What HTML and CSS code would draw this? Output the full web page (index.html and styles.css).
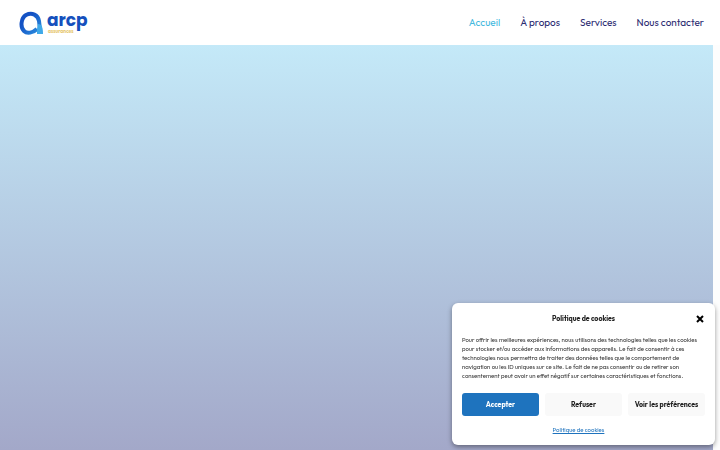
FILE: index.html
```html
<!DOCTYPE html>
<html lang="fr">
<head>
    <meta charset="UTF-8">
    <meta name="viewport" content="width=device-width, initial-scale=1.0">
    <title>ARCP Assurances</title>
    <link rel="stylesheet" href="styles.css">
</head>
<body>
    <header class="header">
        <a href="#" class="logo">
            <svg class="logo-mark" viewBox="0 0 24 24" aria-hidden="true">
                <defs>
                    <linearGradient id="mark" x1="0" y1="0" x2="1" y2="1">
                        <stop offset="0.3" stop-color="#1452c4"/>
                        <stop offset="1" stop-color="#2a8fe0"/>
                    </linearGradient>
                </defs>
                <path d="M18 18C14 22 8 23 5 20C1 16 2 7 7 4C13 1 19 4 20 10L21 18" fill="none" stroke="url(#mark)" stroke-width="4"/>
                <path d="M19 13C23 13 24 17 24 23H18V18Z" fill="#3fa9e8"/>
            </svg>
            <span class="logo-text">
                <span class="logo-name">arcp</span>
                <span class="logo-sub">assurances</span>
            </span>
        </a>
        <nav class="nav">
            <a href="#" class="active">Accueil</a>
            <a href="#">À propos</a>
            <a href="#">Services</a>
            <a href="#">Nous contacter</a>
        </nav>
    </header>

    <main class="hero"></main>

    <div class="cookies" role="dialog" aria-labelledby="cookies-title">
        <div class="cookies-header">
            <h2 class="cookies-title" id="cookies-title">Politique de cookies</h2>
            <button class="close-btn" aria-label="Fermer">
                <svg viewBox="0 0 8 8"><path d="M1 1L7 7M7 1L1 7" stroke="#000" stroke-width="2"/></svg>
            </button>
        </div>
        <p class="cookies-text">
            Pour offrir les meilleures expériences, nous utilisons des technologies telles que les cookies<br>
            pour stocker et/ou accéder aux informations des appareils. Le fait de consentir à ces<br>
            technologies nous permettra de traiter des données telles que le comportement de<br>
            navigation ou les ID uniques sur ce site. Le fait de ne pas consentir ou de retirer son<br>
            consentement peut avoir un effet négatif sur certaines caractéristiques et fonctions.
        </p>
        <div class="cookies-buttons">
            <button class="btn btn-accept">Accepter</button>
            <button class="btn">Refuser</button>
            <button class="btn">Voir les préférences</button>
        </div>
        <a href="#" class="cookies-link">Politique de cookies</a>
    </div>
</body>
</html>
```
FILE: styles.css
```css
* {
    box-sizing: border-box;
}
body {
    margin: 0;
    min-height: 100vh;
    display: flex;
    flex-direction: column;
    background-color: #fdfdfd;
    font-family: Outfit, Lato, sans-serif;
}
.header {
    display: flex;
    justify-content: space-between;
    align-items: center;
    height: 45px;
    padding: 0 16px 0 19px;
    background-color: white;
}
.logo {
    display: flex;
    align-items: center;
    gap: 4px;
    text-decoration: none;
}
.logo-mark {
    width: 24px;
    height: 24px;
}
.logo-text {
    display: flex;
    flex-direction: column;
}
.logo-name {
    color: #1550bd;
    font-family: Poppins, Outfit, sans-serif;
    font-size: 17px;
    font-weight: 700;
    line-height: 17px;
}
.logo-sub {
    color: #e6c66e;
    font-size: 5px;
    font-weight: 700;
    line-height: 5px;
    padding-left: 1px;
}
.nav {
    display: flex;
    gap: 20px;
}
.nav a {
    color: #2c2c72;
    font-size: 10px;
    line-height: 16px;
    text-decoration: none;
}
.nav a.active {
    color: #45b9de;
}
.hero {
    flex: 1;
    margin-right: 7px;
    background: linear-gradient(#c4e9f8, #a3a8c9);
}
.cookies {
    position: fixed;
    right: 5px;
    bottom: 5px;
    width: 263px;
    padding: 11px 10px 10px;
    display: flex;
    flex-direction: column;
    background-color: white;
    border-radius: 6px;
    box-shadow: 0 2px 5px rgba(0, 0, 0, 0.4);
    color: #222;
}
.cookies-header {
    display: grid;
    grid-template-columns: 10px 1fr 10px;
    align-items: center;
}
.cookies-title {
    grid-column: 2;
    margin: 0;
    font-size: 7px;
    font-weight: 700;
    line-height: 10px;
    text-align: center;
}
.close-btn {
    width: 10px;
    height: 10px;
    padding: 1px;
    border: none;
    background: none;
    cursor: pointer;
}
.close-btn svg {
    display: block;
}
.cookies-text {
    margin: 12px 0;
    color: #333;
    font-size: 6px;
    line-height: 9px;
    white-space: nowrap;
}
.cookies-buttons {
    display: grid;
    grid-template-columns: repeat(3, 1fr);
    gap: 6px;
}
.btn {
    height: 23px;
    padding: 0;
    border: none;
    border-radius: 3px;
    background-color: #f9f9f9;
    color: #222;
    font-family: inherit;
    font-size: 7px;
    font-weight: 700;
    white-space: nowrap;
    cursor: pointer;
}
.btn-accept {
    background-color: #1e73be;
    color: white;
}
.cookies-link {
    align-self: center;
    margin: 9px 10px 0 0;
    color: #1e73be;
    font-size: 6px;
    line-height: 10px;
}
```
